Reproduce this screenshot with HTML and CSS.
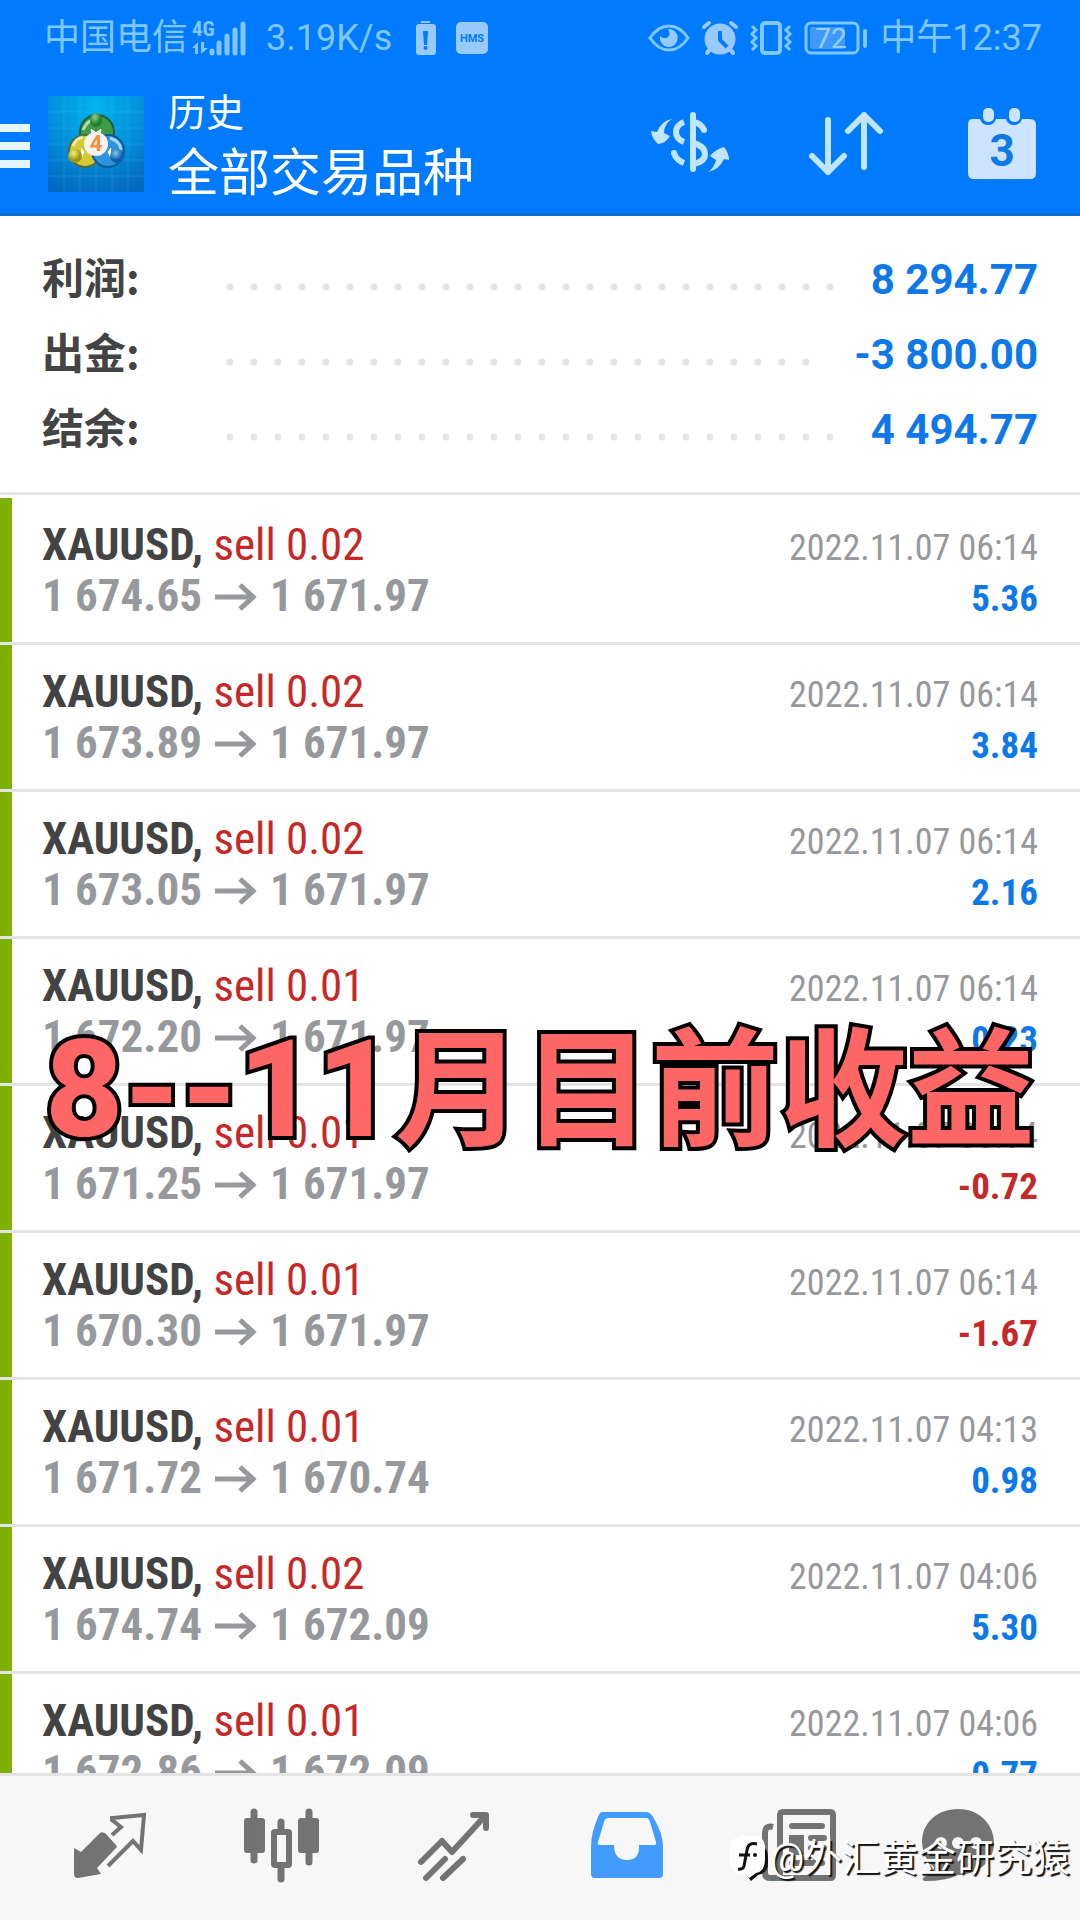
FILE: index.html
```html
<!DOCTYPE html>
<html lang="zh-CN">
<head>
<meta charset="utf-8">
<meta name="viewport" content="width=device-width, initial-scale=1">
<title>历史</title>
<link rel="stylesheet" href="styles.css">
</head>
<body>
<svg width="0" height="0" class="defs" aria-hidden="true">
  <symbol id="arrow" viewBox="0 0 42 28"><path d="M0 14H37M25 2L38 14L25 26" fill="none" stroke="currentColor" stroke-width="5"/></symbol>
</svg>
<div class="app">
  <header class="top">
    <div class="status">
      <div class="status-side">
        <span>中国电信</span>
        <svg class="signal" width="54" height="34" viewBox="0 0 54 34" fill="currentColor" aria-hidden="true">
          <text x="0" y="15" class="net">4G</text>
          <path d="M0 27L6 21V33H3V27ZM9 21H12V27H16L9 33Z"/>
          <path d="M20 30v2M27 22v10M35 15v17M43 9v23M51 3v29" stroke="currentColor" stroke-width="5" stroke-linecap="round"/>
        </svg>
        <span class="speed">3.19K/s</span>
        <svg class="saver" width="20" height="34" viewBox="0 0 20 34" aria-hidden="true">
          <path d="M5 0h9v2H5zM3 3h14q3 0 3 3v25q0 3-3 3H3q-3 0-3-3V6q0-3 3-3z" fill="#99caff"/>
          <path d="M7 10h5l-1 14H8z" fill="#007aff"/><circle cx="9.500" cy="27" r="2" fill="#007aff"/>
        </svg>
        <svg width="32" height="32" viewBox="0 0 32 32" aria-hidden="true">
          <rect width="32" height="32" rx="5" fill="#99caff"/><text x="16" y="20" class="hms">HMS</text>
        </svg>
      </div>
      <div class="status-side right">
        <svg width="42" height="28" viewBox="0 0 42 28" aria-hidden="true">
          <path d="M2 14Q10 2 21 2T40 14Q32 26 21 26T2 14Z" fill="none" stroke="currentColor" stroke-width="3"/>
          <path d="M20 5a9 9 0 1 1-8 7q5 4 8 1t0-8z" fill="#99caff"/>
        </svg>
        <svg width="36" height="34" viewBox="0 0 36 34" aria-hidden="true">
          <circle cx="18" cy="18" r="15.500" fill="#99caff"/>
          <path d="M2 6L7 2M34 6L29 2M5 32l3-4M31 32l-3-4" stroke="#99caff" stroke-width="4" stroke-linecap="round"/>
          <path d="M18 10v9l7 7" fill="none" stroke="#007aff" stroke-width="4"/>
        </svg>
        <svg width="42" height="34" viewBox="0 0 42 34" fill="none" stroke="currentColor" stroke-width="4" aria-hidden="true">
          <rect x="12" y="2" width="18" height="30" rx="3"/>
          <path d="M2 5l4 4-4 4 4 4-4 4 4 4-4 4M40 5l-4 4 4 4-4 4 4 4-4 4 4 4" stroke-width="3"/>
        </svg>
        <svg width="64" height="34" viewBox="0 0 64 34" aria-hidden="true">
          <rect x="2" y="2" width="52" height="30" rx="5" fill="none" stroke="currentColor" stroke-width="3"/>
          <rect x="6" y="6" width="35" height="22" rx="2" fill="#4099ff"/>
          <rect x="59" y="8" width="4" height="19" rx="2" fill="currentColor"/>
          <text x="27" y="27" class="charge">72</text>
        </svg>
        <span>中午12:37</span>
      </div>
    </div>
    <div class="bar">
      <button class="menu" type="button" aria-label="菜单"><i></i><i></i><i></i></button>
      <svg class="logo" width="96" height="96" viewBox="0 0 96 96" aria-hidden="true">
        <defs>
          <radialGradient id="sky" cx=".5" cy=".1" r=".95"><stop offset="0" stop-color="#00b4ee"/><stop offset=".5" stop-color="#0490dc"/><stop offset="1" stop-color="#0468c0"/></radialGradient>
          <radialGradient id="gr" cx=".4" cy=".3"><stop offset="0" stop-color="#8fd08a"/><stop offset="1" stop-color="#1f7d2c"/></radialGradient>
          <radialGradient id="ye" cx=".4" cy=".3"><stop offset="0" stop-color="#f6ee7a"/><stop offset="1" stop-color="#9c9416"/></radialGradient>
          <radialGradient id="bl" cx=".4" cy=".3"><stop offset="0" stop-color="#7cc8f5"/><stop offset="1" stop-color="#085fae"/></radialGradient>
        </defs>
        <rect width="96" height="96" fill="url(#sky)"/>
        <path d="M16 0v96M32 0v96M48 0v96M64 0v96M80 0v96M0 16h96M0 32h96M0 48h96M0 64h96M0 80h96" stroke="#5cc8f4" stroke-opacity=".2"/>
        <circle cx="49" cy="36" r="17" fill="#3d9c45" stroke="#1a5f42" stroke-width="2"/>
        <circle cx="37" cy="55" r="16" fill="#d6c832" stroke="#4b6d3a" stroke-width="2"/>
        <circle cx="60" cy="55" r="16" fill="#2e94dc" stroke="#0b5a9c" stroke-width="2"/>
        <path d="M35 34q5-12 16-11M25 50q3-8 10-9M62 42q10 3 11 12" fill="none" stroke="#fff" stroke-opacity=".6" stroke-width="3"/>
        <path d="M43 33l5 4 5-4-1 5h-8zM33 52l3 4-3 6M63 52l-3 4 3 6" fill="#fff" stroke="#fff"/>
        <ellipse cx="48" cy="24" rx="6" ry="7" fill="url(#gr)"/>
        <circle cx="27" cy="60" r="7" fill="url(#ye)"/><circle cx="69" cy="60" r="7" fill="url(#bl)"/>
        <circle cx="48" cy="48" r="12" fill="#f5f2ef"/>
        <text x="48" y="55" class="logo-num">4</text>
      </svg>
      <div class="titles">
        <span class="sub">历史</span>
        <h1>全部交易品种</h1>
      </div>
      <div class="actions">
        <button type="button" aria-label="货币">
          <svg width="80" height="72" viewBox="0 0 80 72" aria-hidden="true">
            <path d="M43 7V61" stroke="#c2e5ff" stroke-width="6" stroke-linecap="round" fill="none"/>
            <path d="M34 14Q26 17 26 24T34 34M43 14Q51 15 54 22M43 35Q55 38 55 46T43 56M24 45Q26 52 34 55" stroke="#c2e5ff" stroke-width="6" fill="none"/>
            <circle cx="54" cy="22" r="3" fill="#c2e5ff"/><circle cx="24" cy="45" r="3" fill="#c2e5ff"/>
            <path d="M22 11Q14 16 14 25L20 28Q16 35 8 36Q2 31 1 23L7 24Q11 13 22 11ZM58 64Q64 60 66 52L60 48Q66 41 74 39Q79 45 79 52L74 51Q69 62 58 64Z" fill="#c2e5ff"/>
          </svg>
        </button>
        <button type="button" aria-label="排序">
          <svg width="80" height="72" viewBox="0 0 80 72" fill="none" stroke="#c2e5ff" stroke-width="6" stroke-linecap="round" stroke-linejoin="round" aria-hidden="true"><path d="M22 12V64M6 48L22 64L38 48M58 59V7M42 23L58 7L74 23"/></svg>
        </button>
        <button type="button" aria-label="日期">
          <svg width="80" height="72" viewBox="0 0 80 72" aria-hidden="true">
            <path d="M10 11h8q2 6 8 6t8-6h10q2 6 8 6t8-6h8q6 0 6 6v48q0 6-6 6H12q-6 0-6-6V17q0-6 4-6z" fill="#cce4ff"/>
            <rect x="21" y="0" width="11" height="14" rx="5" fill="#cce4ff"/><rect x="47" y="0" width="11" height="14" rx="5" fill="#cce4ff"/>
            <text x="40" y="58" class="day">3</text>
          </svg>
        </button>
      </div>
    </div>
  </header>

  <dl class="summary">
    <div><dt>利润:</dt><dd class="dots"></dd><dd>8 294.77</dd></div>
    <div><dt>出金:</dt><dd class="dots"></dd><dd>-3 800.00</dd></div>
    <div><dt>结余:</dt><dd class="dots"></dd><dd>4 494.77</dd></div>
  </dl>

  <main class="deals">
    <ul>
      <li><p class="line"><span><b>XAUUSD,</b> <em>sell 0.02</em></span><time>2022.11.07 06:14</time></p><p class="line"><span class="price">1 674.65<svg><use href="#arrow"/></svg>1 671.97</span><strong>5.36</strong></p></li>
      <li><p class="line"><span><b>XAUUSD,</b> <em>sell 0.02</em></span><time>2022.11.07 06:14</time></p><p class="line"><span class="price">1 673.89<svg><use href="#arrow"/></svg>1 671.97</span><strong>3.84</strong></p></li>
      <li><p class="line"><span><b>XAUUSD,</b> <em>sell 0.02</em></span><time>2022.11.07 06:14</time></p><p class="line"><span class="price">1 673.05<svg><use href="#arrow"/></svg>1 671.97</span><strong>2.16</strong></p></li>
      <li><p class="line"><span><b>XAUUSD,</b> <em>sell 0.01</em></span><time>2022.11.07 06:14</time></p><p class="line"><span class="price">1 672.20<svg><use href="#arrow"/></svg>1 671.97</span><strong>0.23</strong></p></li>
      <li><p class="line"><span><b>XAUUSD,</b> <em>sell 0.01</em></span><time>2022.11.07 06:14</time></p><p class="line"><span class="price">1 671.25<svg><use href="#arrow"/></svg>1 671.97</span><strong class="loss">-0.72</strong></p></li>
      <li><p class="line"><span><b>XAUUSD,</b> <em>sell 0.01</em></span><time>2022.11.07 06:14</time></p><p class="line"><span class="price">1 670.30<svg><use href="#arrow"/></svg>1 671.97</span><strong class="loss">-1.67</strong></p></li>
      <li><p class="line"><span><b>XAUUSD,</b> <em>sell 0.01</em></span><time>2022.11.07 04:13</time></p><p class="line"><span class="price">1 671.72<svg><use href="#arrow"/></svg>1 670.74</span><strong>0.98</strong></p></li>
      <li><p class="line"><span><b>XAUUSD,</b> <em>sell 0.02</em></span><time>2022.11.07 04:06</time></p><p class="line"><span class="price">1 674.74<svg><use href="#arrow"/></svg>1 672.09</span><strong>5.30</strong></p></li>
      <li><p class="line"><span><b>XAUUSD,</b> <em>sell 0.01</em></span><time>2022.11.07 04:06</time></p><p class="line"><span class="price">1 672.86<svg><use href="#arrow"/></svg>1 672.09</span><strong>0.77</strong></p></li>
    </ul>
    <p class="caption"><span class="months">8--11</span>月目前收益</p>
  </main>

  <nav class="tabs">
    <a href="#quotes" aria-label="行情"><svg width="96" height="80" viewBox="0 0 96 80" aria-hidden="true">
      <path d="M12 43L19 47L38 28Q41 26 44 29L54 40Q56 42 53 44L35 63L39 69L16 73Q12 73 12 69Z" fill="currentColor"/>
      <path d="M50 30L59 22L50 15V13L82 10L79 45L71 36L46 61" fill="none" stroke="currentColor" stroke-width="4"/></svg></a>
    <a href="#chart" aria-label="图表"><svg width="96" height="80" viewBox="0 0 96 80" fill="currentColor" aria-hidden="true">
      <rect x="10" y="13" width="21" height="35" rx="3"/><rect x="64" y="13" width="21" height="35" rx="3"/>
      <path d="M20 7v48M75 7v50M47 17v7M47 62v12" stroke="currentColor" stroke-width="7" stroke-linecap="round"/>
      <rect x="40" y="27" width="15" height="33" rx="1" fill="none" stroke="currentColor" stroke-width="6"/></svg></a>
    <a href="#trade" aria-label="交易"><svg width="96" height="80" viewBox="0 0 96 80" fill="none" stroke="currentColor" stroke-width="6" stroke-linecap="round" stroke-linejoin="round" aria-hidden="true">
      <path d="M15 57L36 36L46 47L79 11M67 10H80V23M20 73L39 54M37 73L57 54"/></svg></a>
    <a href="#history" class="active" aria-label="历史"><svg width="96" height="80" viewBox="0 0 96 80" aria-hidden="true">
      <path fill="currentColor" fill-rule="evenodd" d="M24 7H68Q72 7 75 12Q85 28 85 42V69Q85 73 81 73H17Q13 73 13 69V42Q13 28 20 12Q22 7 24 7ZM30 13Q27 13 26 17L20 37Q19 40 22 40H36Q36 55 49 55T61 40H76Q79 40 78 37L72 17Q71 13 68 13Z"/></svg></a>
    <a href="#news" aria-label="新闻"><svg width="96" height="80" viewBox="0 0 96 80" aria-hidden="true">
      <path d="M23 22Q15 20 15 28V68Q15 73 20 73H80M30 70V10Q30 7 33 7H80Q83 7 83 10V70Q83 73 80 73H33Q30 73 30 70" fill="none" stroke="currentColor" stroke-width="6"/>
      <path d="M42 21h30M61 33h13M61 43h13M42 58h30" stroke="currentColor" stroke-width="6" stroke-linecap="round"/><rect x="39" y="30" width="15" height="20" fill="currentColor"/></svg></a>
    <a href="#chat" aria-label="消息"><svg width="96" height="80" viewBox="0 0 96 80" aria-hidden="true">
      <path d="M36 4C58 4 72 20 72 38S56 70 36 70Q24 76 3 76Q-1 75 2 72Q12 68 12 62Q0 52 0 37C0 18 15 4 36 4Z" fill="currentColor"/>
      <circle cx="19" cy="38" r="6" fill="#f7f7f7"/><circle cx="36" cy="38" r="6" fill="#f7f7f7"/><circle cx="54" cy="38" r="6" fill="#f7f7f7"/></svg></a>
    <div class="mark">
      <svg width="38" height="46" viewBox="0 0 38 46" aria-hidden="true">
        <path d="M31 10Q38 14 38 22V28Q38 38 28 40L21 46L18 42Q30 38 33 28Z" fill="#111"/>
        <path d="M12 1H25Q35 2 35 13V24Q35 36 26 38L19 43L17 40H12Q0 38 0 26V14Q0 3 12 1Z" fill="#fff"/>
        <path d="M27 9Q18 7 17 15L14 31Q13 35 8 34M9 20H20" fill="none" stroke="#111" stroke-width="3"/><circle cx="25" cy="20" r="2" fill="#111"/>
      </svg>
      <span>@外汇黄金研究猿</span>
    </div>
  </nav>
</div>
</body>
</html>
```
FILE: styles.css
```css
* { box-sizing: border-box; }
body, h1, p, ul, dl, dd { margin: 0; padding: 0; }
body {
  background: #fff;
  color: #434343;
  font-family: Roboto, "Noto Sans CJK SC", sans-serif;
}
.defs { position: absolute; }
svg { flex: none; overflow: visible; }
button { border: 0; padding: 0; background: none; color: inherit; font: inherit; }
.app { display: flex; flex-direction: column; height: 100vh; }

/* header */
.top { flex: none; background: #007aff; border-bottom: 3px solid #0a6cd6; color: #fff; }
.status {
  display: flex;
  justify-content: space-between;
  align-items: center;
  height: 72px;
  padding: 3px 38px 0 44px;
  color: #80c6ff;
  font-size: 36px;
  line-height: 40px;
}
.status-side { display: flex; align-items: center; gap: 20px; }
.right { gap: 12px; }
.signal { margin-left: -16px; }
.saver { margin-left: 4px; }
.net { font: 700 21px "Roboto Condensed", "Liberation Sans Narrow", Roboto, sans-serif; }
.hms { font: 700 11px Roboto, sans-serif; text-anchor: middle; fill: #007aff; }
.charge { font: 400 28px Roboto, sans-serif; text-anchor: middle; fill: #99d2ff; }
.bar { display: flex; align-items: center; height: 141px; padding: 3px 38px 0 0; }
.menu { display: flex; flex-direction: column; gap: 10px; width: 30px; margin: 4px 18px 0 0; }
.menu i { height: 8px; background: #e6f6ff; }
.logo-num { font: 700 22px Roboto, sans-serif; text-anchor: middle; fill: #f09040; }
.titles { flex: 1; margin-left: 24px; padding-top: 4px; }
.sub { display: block; font-size: 38px; line-height: 56px; }
h1 { font-size: 51px; font-weight: 400; line-height: 66px; }
.actions { display: flex; gap: 76px; }
.actions svg { display: block; }
.day { font: 700 44px Roboto, sans-serif; text-anchor: middle; fill: #0f7ae5; }

/* totals */
.summary { flex: none; padding: 22px 42px 29px; border-bottom: 3px solid #e4e4e4; font-size: 42px; font-weight: 700; line-height: 75px; }
.summary div { display: flex; align-items: baseline; height: 75px; }
.summary dt { width: 176px; font-family: "Noto Sans CJK SC", sans-serif; }
.summary dd { color: #0d78e8; }
.summary .dots {
  flex: 1;
  height: 11px;
  margin-right: 32px;
  background: radial-gradient(circle at 12px 4px, #e4e4e4 3px, transparent 4px) 0 0 / 24px 11px repeat-x;
}

/* deals */
.deals {
  position: relative;
  flex: 1;
  min-height: 0;
  overflow: hidden;
  font-family: "Roboto Condensed", "Liberation Sans Narrow", Roboto, sans-serif;
}
.deals ul { list-style: none; padding-top: 3px; }
.deals li { height: 147px; padding: 21px 42px 0; box-shadow: inset 12px 0 #7fb000; border-bottom: 3px solid #e4e4e4; }
.line { display: flex; justify-content: space-between; align-items: baseline; height: 51px; font-size: 45px; line-height: 51px; }
.line em { font-style: normal; color: #c62828; }
.line time { font-size: 36px; color: #97989c; }
.line strong { font-size: 37px; color: #0d78e8; }
.line .loss { color: #c62828; }
.price { color: #97989c; font-weight: 700; }
.price svg { width: 42px; height: 28px; margin: 0 13px; }
.caption {
  position: absolute;
  top: 500px;
  left: 0;
  right: 0;
  color: #ff6666;
  font: 700 128px/190px Roboto, "Noto Sans CJK SC", sans-serif;
  text-align: center;
  white-space: nowrap;
  -webkit-text-stroke: 8px #000;
  paint-order: stroke fill;
  stroke-linejoin: round;
}
.months { font-size: 136px; font-weight: 800; }

/* bottom tabs */
.tabs {
  position: relative;
  flex: none;
  display: grid;
  grid-template-columns: repeat(6, 1fr);
  height: 147px;
  padding: 29px 24px 0;
  border-top: 3px solid #e4e4e4;
  background: #f7f7f7;
}
.tabs a { justify-self: center; height: 80px; color: #737373; }
.tabs .active { color: #429cff; }
.mark {
  position: absolute;
  right: 10px;
  bottom: 38px;
  display: flex;
  align-items: center;
  gap: 2px;
  color: #fff;
  font-size: 38px;
  line-height: 48px;
  text-shadow: 2px 2px 1px #111;
}
```
